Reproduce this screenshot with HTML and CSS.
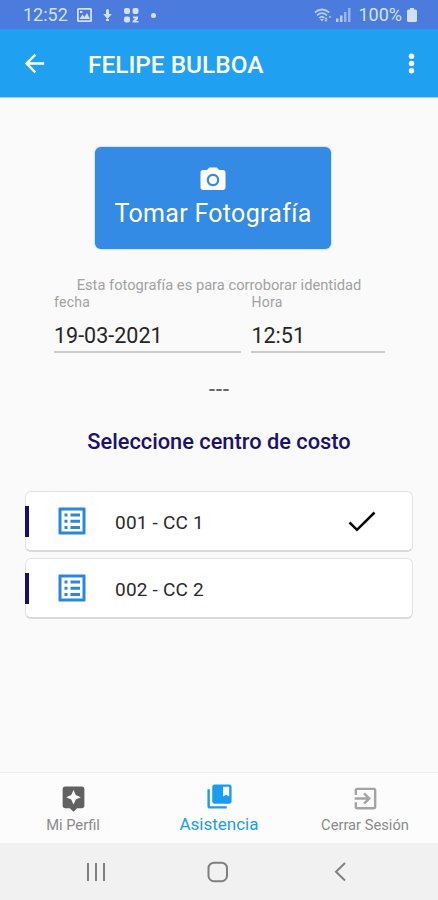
FILE: index.html
```html
<!DOCTYPE html>
<html lang="es">
<head>
<meta charset="utf-8">
<title>Asistencia</title>
<link rel="stylesheet" href="styles.css">
</head>
<body>
<div class="screen">
  <div class="status">
    <span class="status-time">12:52</span>
    <svg class="st-img" width="15" height="14" viewBox="0 0 15 14"><path fill-rule="evenodd" d="M1.500 0h12A1.500 1.500 0 0 1 15 1.500v11a1.500 1.500 0 0 1-1.500 1.500h-12A1.500 1.500 0 0 1 0 12.500v-11A1.500 1.500 0 0 1 1.500 0zM1.800 1.800v10.400h11.400V1.800zM2.500 11l3-4.500 2 2.500 2.500-4 3 6zM3 3h2.400v2H3z"/></svg>
    <svg class="st-mic" width="9" height="14" viewBox="0 0 9 14"><path d="M3 2.500a1.500 1.500 0 0 1 3 0V6h2.800L4.500 11 .2 6H3zM3 11h3v2H3z"/></svg>
    <svg class="st-apps" width="15" height="15" viewBox="0 0 15 15"><rect width="6" height="6" rx="2"/><rect x="8.500" width="6" height="6" rx="2"/><rect y="8.500" width="6" height="6" rx="2"/><path d="M9 8.500h5v2.500l-2 2h2.500v1.500H8.500V13l3-2.500H9z"/></svg>
    <span class="st-dot"></span>
    <span class="spacer"></span>
    <svg class="st-wifi" width="19" height="15" viewBox="0 0 19 15"><g fill="none" stroke="currentColor" stroke-width="1.700"><path d="M.8 4.500Q8 -1.500 15.200 4.500M3 7.300Q8 3 13 7.300M5.300 10Q8 7.500 10.500 10"/></g><path d="M6 11h4l-2 2.500zM12 9l1.800 2.500H10.500zM12 14l-1.500-2h3zM16 7.500l1.500 2h-3z"/></svg>
    <svg class="st-signal" width="15" height="14" viewBox="0 0 15 14"><path d="M0 10.500h2.500V14H0zM4 7.500h2.500V14H4z"/><path opacity=".7" d="M8 4h2.500v10H8zM12 0h2.500v14H12z"/></svg>
    <span class="status-pct">100%</span>
    <svg class="st-bat" width="10" height="14" viewBox="0 0 10 14"><path d="M3 0h4v1.500h1.500A1.500 1.500 0 0 1 10 3v9.500A1.500 1.500 0 0 1 8.500 14h-7A1.500 1.500 0 0 1 0 12.500V3a1.500 1.500 0 0 1 1.500-1.500H3z"/></svg>
  </div>

  <header class="appbar">
    <svg class="back" width="29" height="29" viewBox="0 0 24 24"><path d="M20 11H7.830l5.590-5.590L12 4l-8 8 8 8 1.410-1.410L7.830 13H20z"/></svg>
    <h1>FELIPE BULBOA</h1>
    <svg class="more" width="29" height="29" viewBox="0 0 24 24"><circle cx="12" cy="6" r="2.250"/><circle cx="12" cy="12" r="2.250"/><circle cx="12" cy="18" r="2.250"/></svg>
  </header>

  <main>
    <button class="photo">
      <svg width="30" height="30" viewBox="0 0 24 24"><circle cx="12" cy="12" r="3.200"/><path d="M9 2 7.170 4H4c-1.100 0-2 .9-2 2v12c0 1.100.9 2 2 2h16c1.100 0 2-.9 2-2V6c0-1.100-.9-2-2-2h-3.170L15 2zm3 15c-2.760 0-5-2.240-5-5s2.240-5 5-5 5 2.240 5 5-2.240 5-5 5z"/></svg>
      <span>Tomar Fotografía</span>
    </button>
    <p class="hint">Esta fotografía es para corroborar identidad</p>
    <div class="fields">
      <div class="field date"><label>fecha</label><div class="value">19-03-2021</div></div>
      <div class="field hour"><label>Hora</label><div class="value">12:51</div></div>
    </div>
    <p class="dashes">---</p>
    <h2>Seleccione centro de costo</h2>
    <div class="list">
      <div class="card">
        <i class="mark"></i>
        <svg class="doc" width="28" height="28" viewBox="0 0 28 28"><path fill-rule="evenodd" d="M1.500.5h25a1 1 0 0 1 1 1v25a1 1 0 0 1-1 1h-25a1 1 0 0 1-1-1v-25a1 1 0 0 1 1-1zM3.500 3.500v21h21v-21zM6.500 6.500h3v3h-3zm6 0h9.500v3h-9.500zm-6 6.200h3v3h-3zm6 0h9.500v3h-9.500zm-6 6.200h3v3h-3zm6 0h9.500v3h-9.500z"/></svg>
        <span class="name">001 - CC 1</span>
        <svg class="check" width="28" height="22" viewBox="0 0 28 22"><path d="M1.500 11.500 9 18.800 26.500 1.500" fill="none" stroke="#080808" stroke-width="2.500"/></svg>
      </div>
      <div class="card">
        <i class="mark"></i>
        <svg class="doc" width="28" height="28" viewBox="0 0 28 28"><path fill-rule="evenodd" d="M1.500.5h25a1 1 0 0 1 1 1v25a1 1 0 0 1-1 1h-25a1 1 0 0 1-1-1v-25a1 1 0 0 1 1-1zM3.500 3.500v21h21v-21zM6.500 6.500h3v3h-3zm6 0h9.500v3h-9.500zm-6 6.200h3v3h-3zm6 0h9.500v3h-9.500zm-6 6.200h3v3h-3zm6 0h9.500v3h-9.500z"/></svg>
        <span class="name">002 - CC 2</span>
      </div>
    </div>
  </main>

  <nav class="tabs">
    <div class="tab profile">
      <svg width="29" height="29" viewBox="0 0 24 24"><path d="M19 2H5c-1.100 0-2 .9-2 2v14c0 1.100.9 2 2 2h4l3 3 3-3h4c1.100 0 2-.9 2-2V4c0-1.100-.9-2-2-2zm-5.120 10.880L12 17l-1.880-4.120L6 11l4.120-1.880L12 5l1.880 4.120L18 11z"/></svg>
      <span>Mi Perfil</span>
    </div>
    <div class="tab active">
      <svg width="29" height="29" viewBox="0 0 24 24"><path d="M4 6H2v14c0 1.100.9 2 2 2h14v-2H4zM20 2H8c-1.100 0-2 .9-2 2v12c0 1.100.9 2 2 2h12c1.100 0 2-.9 2-2V4c0-1.100-.9-2-2-2zm0 10-2.500-1.500L15 12V4h5z"/></svg>
      <span>Asistencia</span>
    </div>
    <div class="tab logout">
      <svg width="29" height="29" viewBox="0 0 24 24"><path d="M10.090 15.590 11.500 17l5-5-5-5-1.410 1.410L12.670 11H3v2h9.670zM19 3H5c-1.110 0-2 .9-2 2v4h2V5h14v14H5v-4H3v4c0 1.100.89 2 2 2h14c1.100 0 2-.9 2-2V5c0-1.100-.9-2-2-2z"/></svg>
      <span>Cerrar Sesión</span>
    </div>
  </nav>

  <div class="sysnav">
    <svg width="20" height="20" viewBox="0 0 20 20"><path d="M2 1v18M10 1v18M18 1v18"/></svg>
    <svg width="22" height="22" viewBox="0 0 22 22"><rect x="1.500" y="1.700" width="18.500" height="18.500" rx="5.500"/></svg>
    <svg width="12" height="20" viewBox="0 0 12 20"><path d="M11 1 2 9.800 11 18.500"/></svg>
  </div>
</div>
</body>
</html>
```

FILE: styles.css
```css
* { box-sizing: border-box; }
body, h1, h2, p { margin: 0; }
body { font-family: Roboto, "Liberation Sans", sans-serif; background: #fafafa; }
svg { display: block; flex: none; fill: currentColor; }
span, label, h1, h2, p, .value { white-space: nowrap; }

.screen { width: 438px; height: 900px; display: flex; flex-direction: column; background: #fafafa; overflow: hidden; }

.status { height: 29px; flex: none; background: #4b7bdd; color: #d3e0fa; display: flex; align-items: center; padding: 1px 21px 0 23px; }
.status-time { font-size: 18px; line-height: 28px; }
.st-img { margin-left: 9px; }
.st-mic { margin-left: 11px; }
.st-apps { margin-left: 12px; }
.st-dot { width: 5px; height: 5px; border-radius: 50%; background: currentColor; margin-left: 12px; }
.spacer { flex: 1; }
.st-wifi { opacity: .8; }
.st-signal { margin-left: 3px; opacity: .8; }
.status-pct { font-size: 18px; line-height: 28px; margin-left: 7px; }
.st-bat { margin-left: 5px; }

.appbar { height: 69px; flex: none; background: #1fa0f1; border-bottom: 1px solid #a9cdec; color: #fff; display: flex; align-items: center; padding: 0 12px 0 20px; }
.appbar h1 { flex: 1; margin-left: 39px; font-size: 24.400px; line-height: 28px; font-weight: 500; padding-top: 3px; }

main { flex: 1; padding: 49px 25px 0; display: flex; flex-direction: column; }
.photo { align-self: center; width: 236px; height: 102px; margin-right: 12px; padding: 18px 0 0; border: 0; border-radius: 6px; background: #338be5; color: #fff; font-family: inherit; display: flex; flex-direction: column; align-items: center; box-shadow: 0 0 2px #75b1ee; }
.photo span { font-size: 25px; line-height: 30px; margin-top: 4px; letter-spacing: .3px; }
.hint { align-self: center; margin-top: 28px; font-size: 14.700px; line-height: 17px; color: #a2a2a2; }
.fields { display: flex; gap: 10px; padding: 0 28px 0 29px; }
.date { width: 188px; }
.hour { width: 134px; }
.field label { display: block; font-size: 14px; line-height: 17px; color: #a2a2a2; letter-spacing: .3px; }
.value { height: 42px; padding-top: 12px; font-size: 21.500px; line-height: 26px; color: #252525; border-bottom: 2px solid #cbcbcb; }
.dashes { text-align: center; margin-top: 24px; font-size: 20.500px; line-height: 24px; font-weight: 500; color: #666; }
h2 { text-align: center; margin-top: 27px; font-size: 21.800px; line-height: 28px; font-weight: 500; color: #1b116f; }
.list { margin-top: 35px; display: flex; flex-direction: column; gap: 6px; }
.card { height: 61px; background: #fff; border: 1px solid #e2e2e2; border-bottom: 2px solid #dadada; border-radius: 6px; display: flex; align-items: center; }
.mark { width: 4px; height: 31px; background: #170d70; margin-left: -1px; }
.doc { color: #2b86dc; margin-left: 29px; }
.name { margin-left: 29px; font-size: 19px; line-height: 24px; color: #2a2a2a; padding-top: 3px; letter-spacing: .2px; flex: 1; }
.check { margin: 2px 36px 0 0; }

.tabs { height: 71px; flex: none; border-top: 1px solid #ededed; background: #fcfcfc; display: flex; }
.tab { width: 146px; display: flex; flex-direction: column; align-items: center; padding-top: 11px; color: #8a8a8a; font-size: 14.700px; }
.tab span { line-height: 20px; margin-top: 2px; }
.profile svg { color: #616161; }
.active { color: #1c9cef; font-size: 17px; padding-top: 9px; }
.active span { margin-top: 3px; }
.logout svg { color: #a4a4a4; }

.sysnav { height: 57px; flex: none; background: #f1f1f1; display: flex; align-items: center; padding-left: 86px; }
.sysnav svg { fill: none; stroke: #7f7f7f; stroke-width: 2; }
.sysnav svg + svg { margin-left: 101px; }
.sysnav svg + svg + svg { margin-left: 105px; }
```
